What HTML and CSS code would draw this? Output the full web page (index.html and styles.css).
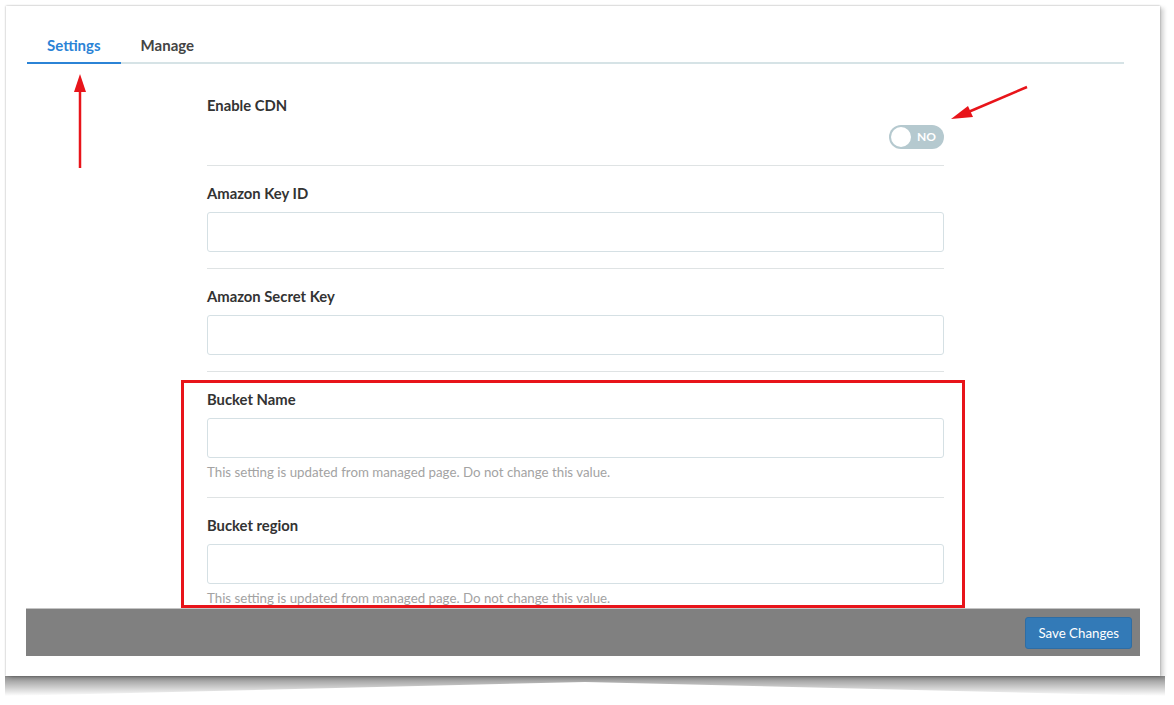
FILE: index.html
```html
<!DOCTYPE html>
<html lang="en">
<head>
    <meta charset="UTF-8">
    <meta name="viewport" content="width=device-width, initial-scale=1.0">
    <title>CDN Settings</title>
    <link rel="stylesheet" href="styles.css">
</head>
<body>
    <div class="frame">
        <div class="panel">
            <!-- Tabs -->
            <div class="tabs">
                <a class="tab active" href="#">Settings</a>
                <a class="tab" href="#">Manage</a>
            </div>

            <!-- Settings form -->
            <div class="form-area">
                <form class="settings-form">
                    <div class="form-row first">
                        <label>Enable CDN</label>
                        <div class="toggle-line">
                            <span class="toggle">
                                <span class="knob"></span>
                                <span class="toggle-text">NO</span>
                            </span>
                        </div>
                    </div>

                    <div class="form-row">
                        <label for="keyId">Amazon Key ID</label>
                        <input type="text" id="keyId">
                    </div>

                    <div class="form-row">
                        <label for="secretKey">Amazon Secret Key</label>
                        <input type="text" id="secretKey">
                    </div>

                    <div class="form-row">
                        <label for="bucketName">Bucket Name</label>
                        <input type="text" id="bucketName">
                        <p class="help">This setting is updated from managed page. Do not change this value.</p>
                    </div>

                    <div class="form-row">
                        <label for="bucketRegion">Bucket region</label>
                        <input type="text" id="bucketRegion">
                        <p class="help">This setting is updated from managed page. Do not change this value.</p>
                    </div>
                </form>
            </div>

            <!-- Footer -->
            <div class="footer">
                <button type="button">Save Changes</button>
            </div>
        </div>

        <!-- Annotations -->
        <div class="highlight-box"></div>
        <svg class="arrows" width="1154" height="670" viewBox="0 0 1154 670">
            <line x1="74" y1="162" x2="74" y2="84" stroke="#e8141a" stroke-width="2.5"/>
            <polygon points="74,68 68,86 80,86" fill="#e8141a"/>
            <line x1="1021" y1="81" x2="960" y2="107" stroke="#e8141a" stroke-width="2.5"/>
            <polygon points="945,113 962,100 967,111" fill="#e8141a"/>
        </svg>
    </div>
</body>
</html>
```

FILE: styles.css
```css
body {
    margin: 0;
    padding: 6px 0 24px;
    background-color: white;
    font-family: Lato, "Open Sans", sans-serif;
    color: #333;
}

.frame {
    position: relative;
    margin: 0 6px;
    width: 1154px;
    height: 670px;
    background-color: white;
    box-sizing: border-box;
    padding: 20px;
    box-shadow: 0 0 2px rgba(0, 0, 0, 0.35), 4px 2px 4px rgba(0, 0, 0, 0.16);
}

/* curled page shadow under the frame */
.frame::after {
    content: "";
    position: absolute;
    top: 100%;
    left: -1px;
    right: -5px;
    height: 20px;
    background: linear-gradient(to bottom, rgba(0, 0, 0, 0.45), rgba(0, 0, 0, 0.18) 60%, rgba(0, 0, 0, 0));
    clip-path: polygon(0 0, 100% 0, 100% 100%, 50% 6px, 0 100%);
}

.panel {
    display: flex;
    flex-direction: column;
    height: 100%;
}

.tabs {
    display: flex;
    margin: 0 16px 0 1px;
    border-bottom: 2px solid #d6e3e6;
}

.tab {
    display: block;
    padding: 9px 20px 7px;
    margin-bottom: -2px;
    line-height: 20px;
    font-size: 15px;
    font-weight: 700;
    color: #444;
    text-decoration: none;
    border-bottom: 2px solid transparent;
}

.tab.active {
    color: #2b83d6;
    border-bottom-color: #2b83d6;
}

.form-area {
    flex: 1;
    overflow: hidden;
}

.settings-form {
    width: 737px;
    margin-left: 181px;
}

.form-row {
    border-top: 1px solid #dfe3e4;
    padding: 17px 0 16px;
}

.form-row.first {
    border-top: none;
    padding-top: 31px;
}

label {
    display: block;
    line-height: 20px;
    font-size: 14.8px;
    font-weight: 700;
    color: #333;
    margin-bottom: 9px;
}

.form-row.first label {
    margin-bottom: 10px;
}

input {
    display: block;
    width: 100%;
    height: 40px;
    box-sizing: border-box;
    border: 1px solid #d5e0e4;
    border-radius: 3px;
    padding: 6px 10px;
    font-size: 14px;
}

.help {
    margin: 5px 0 0;
    line-height: 18px;
    font-size: 13.3px;
    color: #a3a3a3;
}

.toggle-line {
    display: flex;
    justify-content: flex-end;
}

.toggle {
    position: relative;
    display: block;
    width: 55px;
    height: 24px;
    border-radius: 12px;
    background-color: #b5c9cf;
}

.knob {
    position: absolute;
    left: 2px;
    top: 2px;
    width: 20px;
    height: 20px;
    border-radius: 50%;
    background-color: white;
}

.toggle-text {
    position: absolute;
    right: 8px;
    top: 0;
    line-height: 24px;
    font-size: 12px;
    font-weight: 700;
    color: white;
}

.footer {
    display: flex;
    justify-content: flex-end;
    align-items: flex-start;
    height: 48px;
    box-sizing: border-box;
    padding: 8px 8px 0;
    background-color: #808080;
    border-top: 1px solid #c4c4c4;
}

button {
    height: 32px;
    padding: 0 12px;
    border: 1px solid #2e6da4;
    border-radius: 3px;
    background-color: #337ab7;
    color: white;
    font-family: Lato, "Open Sans", sans-serif;
    font-size: 13.3px;
    cursor: pointer;
}

.highlight-box {
    position: absolute;
    left: 175px;
    top: 374px;
    width: 784px;
    height: 228px;
    box-sizing: border-box;
    border: 3px solid #e8141a;
}

.arrows {
    position: absolute;
    left: 0;
    top: 0;
    pointer-events: none;
}
```
